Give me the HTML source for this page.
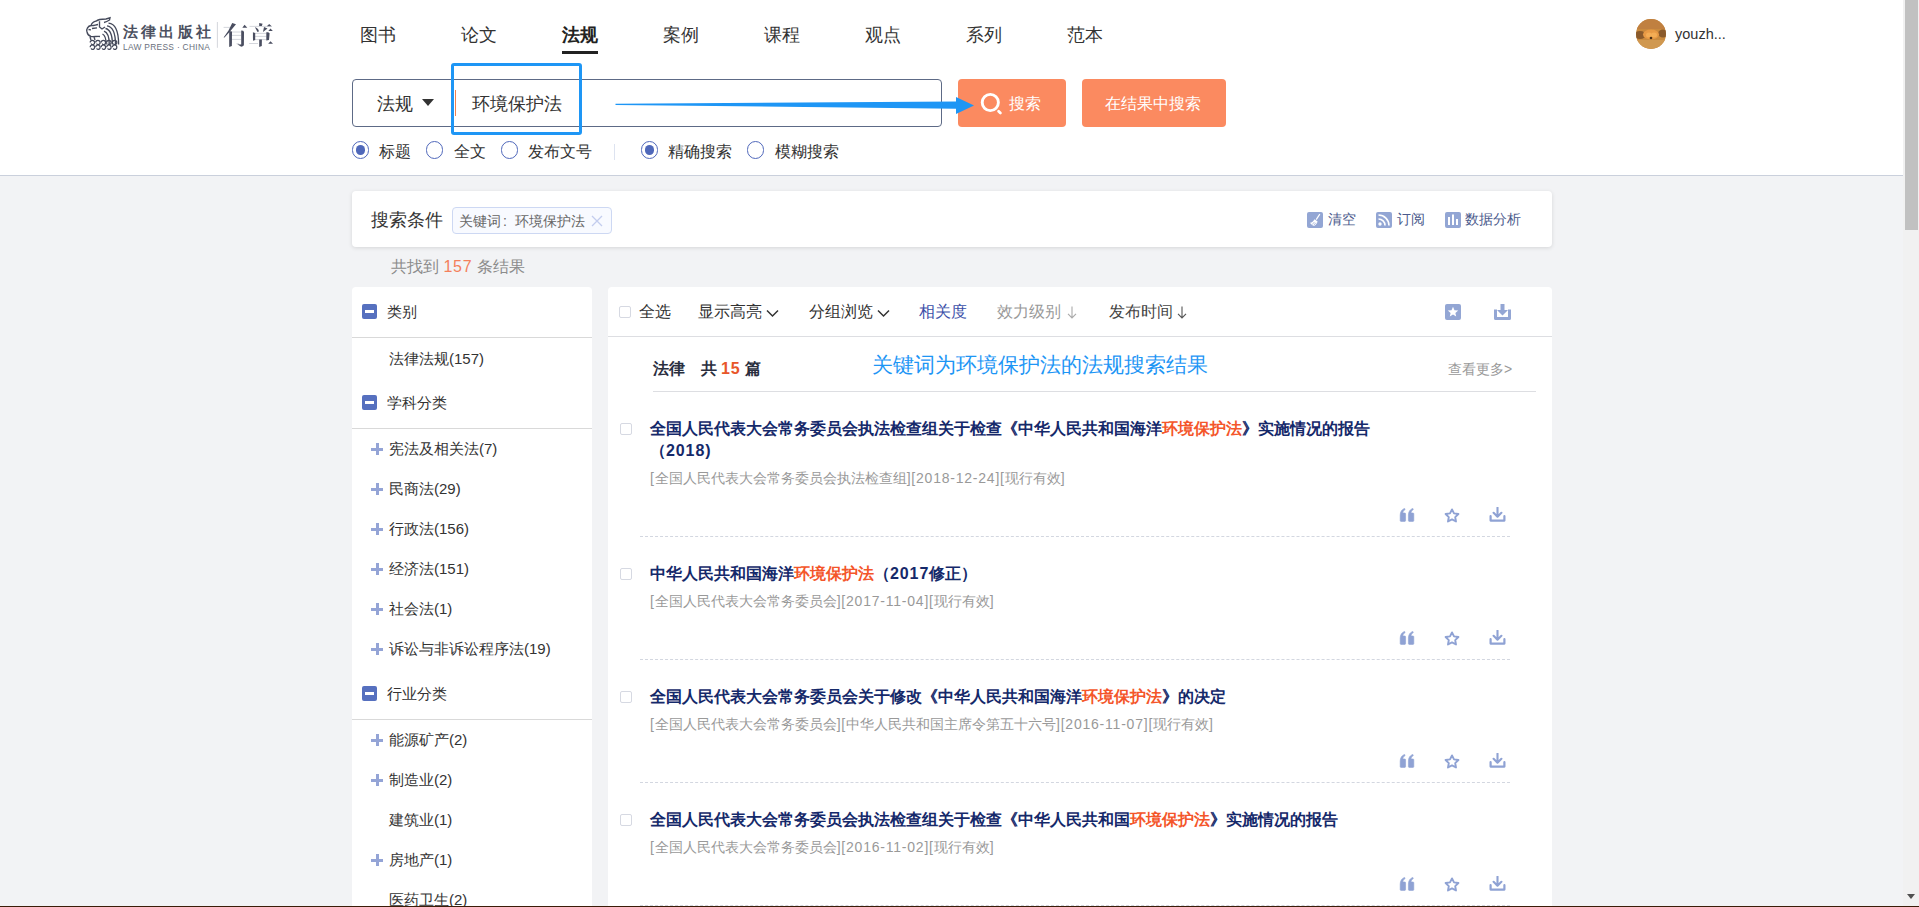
<!DOCTYPE html>
<html><head><meta charset="utf-8">
<style>
html,body{margin:0;padding:0;}
body{width:1919px;height:907px;position:relative;overflow:hidden;background:#f2f3f5;font-family:"Liberation Sans",sans-serif;color:#333;}
.a{position:absolute;white-space:nowrap;}
#hdr{position:absolute;left:0;top:0;width:1903px;height:175px;background:#fff;border-bottom:1px solid #cad0dc;}
.nav{font-size:18px;line-height:24px;color:#333;top:22.5px;}
.radio{width:15.4px;height:15.4px;border:1px solid #5068bb;border-radius:50%;box-sizing:content-box;}
.radio.on::after{content:"";position:absolute;left:3px;top:3px;width:9.4px;height:9.4px;border-radius:50%;background:#4f68ba;}
.rl{font-size:16px;line-height:20px;color:#333;top:142px;}
.panel{position:absolute;background:#fff;border-radius:4px;}
.side{font-size:15px;line-height:20px;color:#333;}
.minus{width:15px;height:15px;background:#5670bf;border-radius:2px;}
.minus::after{content:"";position:absolute;left:3.2px;top:6.3px;width:8.6px;height:2.6px;background:#fff;}
.plus{width:12px;height:12px;}
.plus::before{content:"";position:absolute;left:0;top:4.5px;width:12px;height:3px;background:#94a4d6;}
.plus::after{content:"";position:absolute;left:4.5px;top:0;width:3px;height:12px;background:#94a4d6;}
.hline{position:absolute;height:1px;background:#d9d9d9;}
.tb{font-size:16px;line-height:20px;top:302px;color:#333;}
.cb{width:10px;height:10px;border:1px solid #d6d9e2;border-radius:2px;background:#fff;}
.title{font-size:16px;line-height:22px;font-weight:bold;color:#15296a;}
.hl{color:#f4562a;}
.meta{font-size:14px;line-height:18px;color:#999;}
.n{letter-spacing:0.78px;}
.n2{letter-spacing:0.9px;}
.dash{position:absolute;left:640px;width:870px;height:0;border-top:1px dashed #d3d7e0;}
.ic{position:absolute;}
.cath{top:358px;font-size:16px;line-height:22px;font-weight:bold;color:#2a2f3f;}
</style></head>
<body>
<div id="hdr"></div>

<!-- logo -->
<svg class="a" style="left:82px;top:14px" width="42" height="40" viewBox="0 0 42 40">
 <g fill="none" stroke="#454a5b" stroke-width="1.35">
  <path d="M5 18 C4 15 6 12 9 11.5 C10 9 12 7.5 14 7.2 C16 5.5 20 5 24 5 L28 3.8 L27.5 6 C26 7 24 8 22 8.5"/>
  <path d="M5 18 C5.5 20.5 7 22 9 22.5 C12 23 15 22 18 22.5"/>
  <path d="M9 11.5 C11 12 13 11 16 10.5 M10 14.5 L15 13.8 M6.5 15.5 L9 15.8"/>
  <path d="M17.5 7.2 V13 L20 15 L23 13"/>
  <path d="M8 23 L9 26 M12 23 L13 26"/>
  <path d="M26.5 9.2 Q36.6 10 36.6 30.5"/>
  <path d="M25 11.8 Q33.5 13 33.5 30.5"/>
  <path d="M23.5 14.5 Q30.4 16 30.4 30.5"/>
  <path d="M22 17.2 Q27.3 19 27.3 30.5"/>
  <path d="M20.5 20 Q24.2 22 24.2 30.5"/>
 </g>
 <g fill="none" stroke="#454a5b" stroke-width="1.2">
  <path d="M10.4 28.5 m-2.2 0 a2.2 2.2 0 1 1 2.2 2.2 a1.1 1.1 0 0 1 -1.1 -1.1"/>
  <path d="M15.9 28.5 m-2.2 0 a2.2 2.2 0 1 1 2.2 2.2 a1.1 1.1 0 0 1 -1.1 -1.1"/>
  <path d="M21.4 28.5 m-2.2 0 a2.2 2.2 0 1 1 2.2 2.2 a1.1 1.1 0 0 1 -1.1 -1.1"/>
  <path d="M26.9 28.5 m-2.2 0 a2.2 2.2 0 1 1 2.2 2.2 a1.1 1.1 0 0 1 -1.1 -1.1"/>
  <path d="M32.6 28.5 m-2.2 0 a2.2 2.2 0 1 1 2.2 2.2 a1.1 1.1 0 0 1 -1.1 -1.1"/>
  <path d="M10.4 33.2 m-2.2 0 a2.2 2.2 0 1 1 2.2 2.2 a1.1 1.1 0 0 1 -1.1 -1.1"/>
  <path d="M15.9 33.2 m-2.2 0 a2.2 2.2 0 1 1 2.2 2.2 a1.1 1.1 0 0 1 -1.1 -1.1"/>
  <path d="M21.4 33.2 m-2.2 0 a2.2 2.2 0 1 1 2.2 2.2 a1.1 1.1 0 0 1 -1.1 -1.1"/>
  <path d="M26.9 33.2 m-2.2 0 a2.2 2.2 0 1 1 2.2 2.2 a1.1 1.1 0 0 1 -1.1 -1.1"/>
  <path d="M32.6 33.2 m-2.2 0 a2.2 2.2 0 1 1 2.2 2.2 a1.1 1.1 0 0 1 -1.1 -1.1"/>
  
 </g>
</svg>
<div class="a" style="left:123px;top:22px;font-size:15px;line-height:20px;font-weight:bold;color:#4b5060;letter-spacing:3.2px">法律出版社</div>
<div class="a" style="left:123px;top:42px;font-size:8.4px;line-height:10px;color:#6a6f7c;letter-spacing:0.3px">LAW PRESS · CHINA</div>
<svg class="a" style="left:215px;top:18px" width="62" height="34" viewBox="0 0 62 34">
 <g stroke="#cfd1d8" stroke-width="0.9">
  <path d="M2.4 4 V29.8"/>
  <path d="M8.6 9.4 H15"/><path d="M17 14 H26"/><path d="M17 17.4 H26"/><path d="M17 21.4 H26"/><path d="M21.5 25.7 H24"/>
  <path d="M34.5 8.4 H57"/><path d="M40 15.4 H51.5"/><path d="M40 18.4 H51.5"/><path d="M40 21.6 H51.5"/><path d="M34.1 25.5 H43"/>
 </g>
 <g fill="#4a4e60">
  <path d="M17.2 5 L21 6.2 L15 13.5 L9.5 19.6 L8.6 19.4 L13.5 12.5 Z"/>
  <path d="M29.6 6.8 L32.3 9.7 L27.3 9.7 Z"/>
  <path d="M14.2 13 L17 13.6 L16.9 28 L14.2 29 Z"/>
  <path d="M26.2 12.4 L28.2 12.8 L29 14 L28.9 27 C28.5 28.6 26.5 28.7 25.8 28.6 L22.3 26.2 L26.2 26.4 Z"/>
  <path d="M44.2 5 L47.6 5.8 L46.8 8 L44.2 8 Z"/>
  <path d="M54.2 5.9 L56.6 8.3 L51.9 8.3 Z"/>
  <path d="M40.1 9 C42.5 10 44 11.8 43.8 13.5 L42.5 14 L40.5 10.2 Z"/>
  <path d="M49 9 L52.5 10.4 L48 13.9 Z"/>
  <path d="M55.5 10.6 L57.8 12.9 L53.3 12.9 Z"/>
  <path d="M37.9 14.2 L40.2 15 L40.2 22 L38 22.8 Z"/>
  <path d="M51.3 14.2 L53.2 14.2 L54.6 15.2 L54 22 L51.3 22.6 Z"/>
  <path d="M44.2 21.6 L46.9 21.6 L46.8 28 L44.2 29 Z"/>
  <path d="M55.5 23.3 L58 25.8 L53.2 25.8 Z"/>
 </g>
</svg>

<!-- nav -->
<div class="a nav" style="left:360px">图书</div>
<div class="a nav" style="left:461px">论文</div>
<div class="a nav" style="left:562px;font-weight:bold;color:#222">法规</div>
<div class="a" style="left:562px;top:51px;width:36px;height:3px;background:#222"></div>
<div class="a nav" style="left:663px">案例</div>
<div class="a nav" style="left:764px">课程</div>
<div class="a nav" style="left:865px">观点</div>
<div class="a nav" style="left:966px">系列</div>
<div class="a nav" style="left:1067px">范本</div>

<!-- avatar -->
<svg class="a" style="left:1636px;top:19px" width="30" height="30" viewBox="0 0 30 30"><defs><clipPath id="av"><circle cx="15" cy="15" r="15"/></clipPath></defs><g clip-path="url(#av)"><rect width="30" height="30" fill="#c98a3e"/><rect y="0" width="30" height="10" fill="#c08040"/><ellipse cx="4" cy="16" rx="6" ry="4" fill="#8a5a2c"/><ellipse cx="27" cy="14.5" rx="5" ry="4" fill="#8a5a2c"/><ellipse cx="15" cy="15.5" rx="8" ry="5" fill="#e89a45"/><ellipse cx="13" cy="16" rx="3" ry="2.5" fill="#f4ad55"/><ellipse cx="18" cy="16" rx="3" ry="2.5" fill="#f4ad55"/><circle cx="15" cy="19" r="1.3" fill="#4a3018"/><rect y="21" width="30" height="9" fill="#d09850"/></g></svg>
<div class="a" style="left:1675px;top:24px;font-size:14.5px;line-height:20px;color:#333">youzh...</div>

<!-- search box -->
<div class="a" style="left:352px;top:79px;width:588px;height:46px;border:1px solid #5d6a86;border-radius:4px;background:#fff"></div>
<div class="a" style="left:377px;top:92px;font-size:18px;line-height:24px;color:#333">法规</div>
<svg class="a" style="left:422px;top:99px" width="12" height="8"><path d="M0 0 L12 0 L6 7 Z" fill="#333"/></svg>
<div class="a" style="left:455px;top:90px;width:1px;height:26px;background:#f08050"></div>
<div class="a" style="left:472px;top:92px;font-size:18px;line-height:24px;color:#333">环境保护法</div>
<div class="a" style="left:451px;top:63px;width:125px;height:66px;border:3px solid #1e96f5;border-radius:3px"></div>

<div class="a" style="left:958px;top:79px;width:108px;height:48px;border-radius:4px;background:#fb8a60"></div>
<svg class="a" style="left:978px;top:92px" width="26" height="24" viewBox="0 0 26 24"><circle cx="12.3" cy="10.5" r="8.1" fill="none" stroke="#fff" stroke-width="2.9"/><path d="M20.6 19.2 L22.4 21" stroke="#fff" stroke-width="2.8" stroke-linecap="round"/></svg>
<div class="a" style="left:1009px;top:94px;font-size:16px;line-height:20px;color:#fff">搜索</div>
<div class="a" style="left:1082px;top:79px;width:144px;height:48px;border-radius:4px;background:#fb8a60"></div>
<div class="a" style="left:1105px;top:94px;font-size:16px;line-height:20px;color:#fff">在结果中搜索</div>
<svg class="a" style="left:600px;top:91px" width="380" height="30" viewBox="0 0 380 30">
 <path d="M15.5 12.8 L356 10.6 L356 6 L374 14.5 L356 23 L356 17.8 L15.5 13.9 Z" fill="#1e96f5"/>
</svg>

<!-- radios -->
<div class="a radio on" style="left:352px;top:141.3px"></div>
<div class="a rl" style="left:379px">标题</div>
<div class="a radio" style="left:426px;top:141.3px"></div>
<div class="a rl" style="left:454px">全文</div>
<div class="a radio" style="left:501px;top:141.3px"></div>
<div class="a rl" style="left:528px">发布文号</div>
<div class="a" style="left:614px;top:144px;width:1px;height:16px;background:#dde3f0"></div>
<div class="a radio on" style="left:641px;top:141.3px"></div>
<div class="a rl" style="left:668px">精确搜索</div>
<div class="a radio" style="left:747px;top:141.3px"></div>
<div class="a rl" style="left:775px">模糊搜索</div>

<!-- search conditions panel -->
<div class="panel" style="left:352px;top:191px;width:1200px;height:56px;box-shadow:0 1px 4px rgba(0,0,0,0.12)"></div>
<div class="a" style="left:371px;top:208px;font-size:18px;line-height:24px;color:#333">搜索条件</div>
<div class="a" style="left:452px;top:207px;width:158px;height:25px;border:1px solid #cdd8f3;border-radius:4px;background:#f8faff"></div>
<div class="a" style="left:459px;top:212px;font-size:14px;line-height:18px;color:#666">关键词<span style="display:inline-block;width:14px;padding-left:2px;box-sizing:border-box">:</span>环境保护法</div>
<svg class="a" style="left:591px;top:215px" width="12" height="12"><path d="M1 1 L11 11 M11 1 L1 11" stroke="#c3cdee" stroke-width="1.3"/></svg>

<svg class="a" style="left:1307px;top:212px" width="16" height="16" viewBox="0 0 16 16"><rect width="16" height="16" rx="2" fill="#93a6d4"/><path d="M12.8 2.2 L9.2 7.6" stroke="#fff" stroke-width="1.2" fill="none"/><path d="M7.6 7.2 L10.6 9.4 C10 11.5 8.6 13.2 7 14 C5.5 13.5 3.8 12.3 3 10.8 C4.8 10.5 6.5 9.2 7.6 7.2 Z" fill="#fff"/><path d="M5.2 12.6 L7.4 10 M6.8 13.3 L8.8 10.8" stroke="#93a6d4" stroke-width="0.7"/></svg>
<div class="a" style="left:1328px;top:210px;font-size:14px;line-height:18px;color:#4b5a8c">清空</div>
<svg class="a" style="left:1376px;top:212px" width="16" height="16" viewBox="0 0 16 16"><rect width="16" height="16" rx="2" fill="#93a6d4"/><circle cx="4" cy="12" r="1.7" fill="#fff"/><path d="M2.5 7 A6.5 6.5 0 0 1 9 13.5 M2.5 3 A10.5 10.5 0 0 1 13 13.5" stroke="#fff" stroke-width="1.6" fill="none"/></svg>
<div class="a" style="left:1397px;top:210px;font-size:14px;line-height:18px;color:#4b5a8c">订阅</div>
<svg class="a" style="left:1445px;top:212px" width="16" height="16" viewBox="0 0 16 16"><rect width="16" height="16" rx="2" fill="#93a6d4"/><rect x="3" y="5" width="2" height="8" fill="#fff"/><rect x="7" y="2.5" width="2" height="10.5" fill="#fff"/><rect x="11" y="7" width="2" height="6" fill="#fff"/></svg>
<div class="a" style="left:1465px;top:210px;font-size:14px;line-height:18px;color:#4b5a8c">数据分析</div>

<div class="a" style="left:391px;top:257px;font-size:16px;line-height:20px;color:#8c8c8c">共找到 <span style="color:#f4805c;letter-spacing:0.7px">157</span> 条结果</div>

<!-- left sidebar -->
<div class="panel" style="left:352px;top:287px;width:240px;height:640px"></div>
<div class="a minus" style="left:362px;top:304px"></div>
<div class="a side" style="left:387px;top:302px">类别</div>
<div class="hline" style="left:352px;top:337px;width:240px"></div>
<div class="a side" style="left:389px;top:349px">法律法规(157)</div>

<div class="a minus" style="left:362px;top:395px"></div>
<div class="a side" style="left:387px;top:393px">学科分类</div>
<div class="hline" style="left:352px;top:428px;width:240px"></div>
<div class="a plus" style="left:371px;top:443px"></div><div class="a side" style="left:389px;top:439px">宪法及相关法(7)</div>
<div class="a plus" style="left:371px;top:483px"></div><div class="a side" style="left:389px;top:479px">民商法(29)</div>
<div class="a plus" style="left:371px;top:523px"></div><div class="a side" style="left:389px;top:519px">行政法(156)</div>
<div class="a plus" style="left:371px;top:563px"></div><div class="a side" style="left:389px;top:559px">经济法(151)</div>
<div class="a plus" style="left:371px;top:603px"></div><div class="a side" style="left:389px;top:599px">社会法(1)</div>
<div class="a plus" style="left:371px;top:643px"></div><div class="a side" style="left:389px;top:639px">诉讼与非诉讼程序法(19)</div>

<div class="a minus" style="left:362px;top:686px"></div>
<div class="a side" style="left:387px;top:684px">行业分类</div>
<div class="hline" style="left:352px;top:719px;width:240px"></div>
<div class="a plus" style="left:371px;top:734px"></div><div class="a side" style="left:389px;top:730px">能源矿产(2)</div>
<div class="a plus" style="left:371px;top:774px"></div><div class="a side" style="left:389px;top:770px">制造业(2)</div>
<div class="a side" style="left:389px;top:810px">建筑业(1)</div>
<div class="a plus" style="left:371px;top:854px"></div><div class="a side" style="left:389px;top:850px">房地产(1)</div>
<div class="a side" style="left:389px;top:890px">医药卫生(2)</div>

<!-- right panel -->
<div class="panel" style="left:608px;top:287px;width:944px;height:640px"></div>
<div class="a cb" style="left:619px;top:306px"></div>
<div class="a tb" style="left:639px">全选</div>
<div class="a tb" style="left:698px">显示高亮</div>
<svg class="a" style="left:766px;top:309px" width="13" height="9"><path d="M1 1.5 L6.5 7 L12 1.5" stroke="#333" stroke-width="1.5" fill="none"/></svg>
<div class="a tb" style="left:809px">分组浏览</div>
<svg class="a" style="left:877px;top:309px" width="13" height="9"><path d="M1 1.5 L6.5 7 L12 1.5" stroke="#333" stroke-width="1.5" fill="none"/></svg>
<div class="a tb" style="left:919px;color:#3b4fa8">相关度</div>
<div class="a tb" style="left:997px;color:#999">效力级别</div><svg class="a" style="left:1067px;top:306px" width="10" height="13" viewBox="0 0 10 13"><path d="M5 0.5 V12 M1 7.8 L5 12 L9 7.8" stroke="#aaa" stroke-width="1.1" fill="none"/></svg>
<div class="a tb" style="left:1109px;color:#444">发布时间</div><svg class="a" style="left:1177px;top:306px" width="10" height="13" viewBox="0 0 10 13"><path d="M5 0.5 V12 M1 7.8 L5 12 L9 7.8" stroke="#555" stroke-width="1.1" fill="none"/></svg>
<svg class="a" style="left:1445px;top:304px" width="16" height="16" viewBox="0 0 16 16"><rect width="16" height="16" rx="2" fill="#93a6d4"/><path d="M8 2.8 L9.5 6.2 L13.2 6.5 L10.4 8.9 L11.2 12.5 L8 10.6 L4.8 12.5 L5.6 8.9 L2.8 6.5 L6.5 6.2 Z" fill="#fff"/></svg>
<svg class="a" style="left:1494px;top:304px" width="17" height="16" viewBox="0 0 17 16"><path d="M6.5 0 H10.5 V6 H14 L8.5 11.5 L3 6 H6.5 Z" fill="#93a6d4"/><path d="M1.5 5.5 V14.5 H15.5 V5.5" stroke="#93a6d4" stroke-width="3" fill="none" stroke-linejoin="round"/></svg>
<div class="hline" style="left:608px;top:336px;width:944px;background:#dddee2"></div>

<div class="a cath" style="left:653px">法律</div><div class="a cath" style="left:701px">共</div><div class="a cath" style="left:721px;color:#e8562a;letter-spacing:0.8px">15</div><div class="a cath" style="left:745px">篇</div>
<div class="a" style="left:872px;top:351px;font-size:21px;line-height:28px;color:#1e96f5">关键词为环境保护法的法规搜索结果</div>
<div class="a" style="left:1448px;top:360px;font-size:14px;line-height:18px;color:#999">查看更多&gt;</div>
<div class="hline" style="left:653px;top:391px;width:883px;background:#dddee2"></div>

<!-- item 1 -->
<div class="a cb" style="left:620px;top:423px"></div>
<div class="a title" style="left:650px;top:418px">全国人民代表大会常务委员会执法检查组关于检查《中华人民共和国海洋<span class="hl">环境保护法</span>》实施情况的报告<br>（<span class="n2">2018)</span></div>
<div class="a meta" style="left:650px;top:469px"><span class="n">[</span>全国人民代表大会常务委员会执法检查组<span class="n">][2018-12-24][</span>现行有效<span class="n">]</span></div>
<div class="dash" style="top:536px"></div>

<!-- item 2 -->
<div class="a cb" style="left:620px;top:568px"></div>
<div class="a title" style="left:650px;top:563px">中华人民共和国海洋<span class="hl">环境保护法</span>（<span class="n2">2017</span>修正）</div>
<div class="a meta" style="left:650px;top:592px"><span class="n">[</span>全国人民代表大会常务委员会<span class="n">][2017-11-04][</span>现行有效<span class="n">]</span></div>
<div class="dash" style="top:659px"></div>

<!-- item 3 -->
<div class="a cb" style="left:620px;top:691px"></div>
<div class="a title" style="left:650px;top:686px">全国人民代表大会常务委员会关于修改《中华人民共和国海洋<span class="hl">环境保护法</span>》的决定</div>
<div class="a meta" style="left:650px;top:715px"><span class="n">[</span>全国人民代表大会常务委员会<span class="n">][</span>中华人民共和国主席令第五十六号<span class="n">][2016-11-07][</span>现行有效<span class="n">]</span></div>
<div class="dash" style="top:782px"></div>

<!-- item 4 -->
<div class="a cb" style="left:620px;top:814px"></div>
<div class="a title" style="left:650px;top:809px">全国人民代表大会常务委员会执法检查组关于检查《中华人民共和国<span class="hl">环境保护法</span>》实施情况的报告</div>
<div class="a meta" style="left:650px;top:838px"><span class="n">[</span>全国人民代表大会常务委员会<span class="n">][2016-11-02][</span>现行有效<span class="n">]</span></div>
<div class="dash" style="top:905px"></div>

<svg width="0" height="0" style="position:absolute">
<defs>
<symbol id="sq" viewBox="0 0 16 14"><path d="M1.2 7 C1.2 3.6 3 1.2 5.6 0.4 L6.1 1.6 C4.6 2.4 3.9 3.6 3.8 5 H5.8 Q6.6 5 6.6 5.8 V12.6 Q6.6 13.4 5.8 13.4 H2 Q1.2 13.4 1.2 12.6 Z M9.4 7 C9.4 3.6 11.2 1.2 13.8 0.4 L14.3 1.6 C12.8 2.4 12.1 3.6 12 5 H14 Q14.8 5 14.8 5.8 V12.6 Q14.8 13.4 14 13.4 H10.2 Q9.4 13.4 9.4 12.6 Z" fill="#8fa2d4" stroke="#8fa2d4" stroke-width="0.6" stroke-linejoin="round"/></symbol>
<symbol id="ss" viewBox="0 0 16 15"><path d="M8 1.4 L10 5.4 L14.4 6 L11.2 9.1 L12 13.5 L8 11.4 L4 13.5 L4.8 9.1 L1.6 6 L6 5.4 Z" fill="none" stroke="#8fa2d4" stroke-width="1.9" stroke-linejoin="round"/></symbol>
<symbol id="sd" viewBox="0 0 17 15"><path d="M8.5 0.6 V9.6 M4.6 5.8 L8.5 9.7 L12.4 5.8" stroke="#8fa2d4" stroke-width="2.1" fill="none" stroke-linecap="round" stroke-linejoin="round"/><path d="M1.6 9.2 V13.6 H15.4 V9.2" stroke="#8fa2d4" stroke-width="2.2" fill="none" stroke-linecap="round" stroke-linejoin="round"/></symbol>
</defs></svg>
<svg class="a" style="left:1399px;top:508px" width="16" height="14"><use href="#sq"/></svg><svg class="a" style="left:1444px;top:508px" width="16" height="15"><use href="#ss"/></svg><svg class="a" style="left:1489px;top:507px" width="17" height="15"><use href="#sd"/></svg>
<svg class="a" style="left:1399px;top:631px" width="16" height="14"><use href="#sq"/></svg><svg class="a" style="left:1444px;top:631px" width="16" height="15"><use href="#ss"/></svg><svg class="a" style="left:1489px;top:630px" width="17" height="15"><use href="#sd"/></svg>
<svg class="a" style="left:1399px;top:754px" width="16" height="14"><use href="#sq"/></svg><svg class="a" style="left:1444px;top:754px" width="16" height="15"><use href="#ss"/></svg><svg class="a" style="left:1489px;top:753px" width="17" height="15"><use href="#sd"/></svg>
<svg class="a" style="left:1399px;top:877px" width="16" height="14"><use href="#sq"/></svg><svg class="a" style="left:1444px;top:877px" width="16" height="15"><use href="#ss"/></svg><svg class="a" style="left:1489px;top:876px" width="17" height="15"><use href="#sd"/></svg>


<!-- scrollbar -->
<div class="a" style="left:1903px;top:0;width:16px;height:907px;background:#f1f1f1"></div>
<div class="a" style="left:1905px;top:0;width:13px;height:230px;background:#c1c1c1"></div>
<svg class="a" style="left:1907px;top:894px" width="9" height="6"><path d="M0 0 H8 L4 5 Z" fill="#505050"/></svg>
<div class="a" style="left:0;top:906px;width:1919px;height:1px;background:#3a1c08"></div>
</body></html>
